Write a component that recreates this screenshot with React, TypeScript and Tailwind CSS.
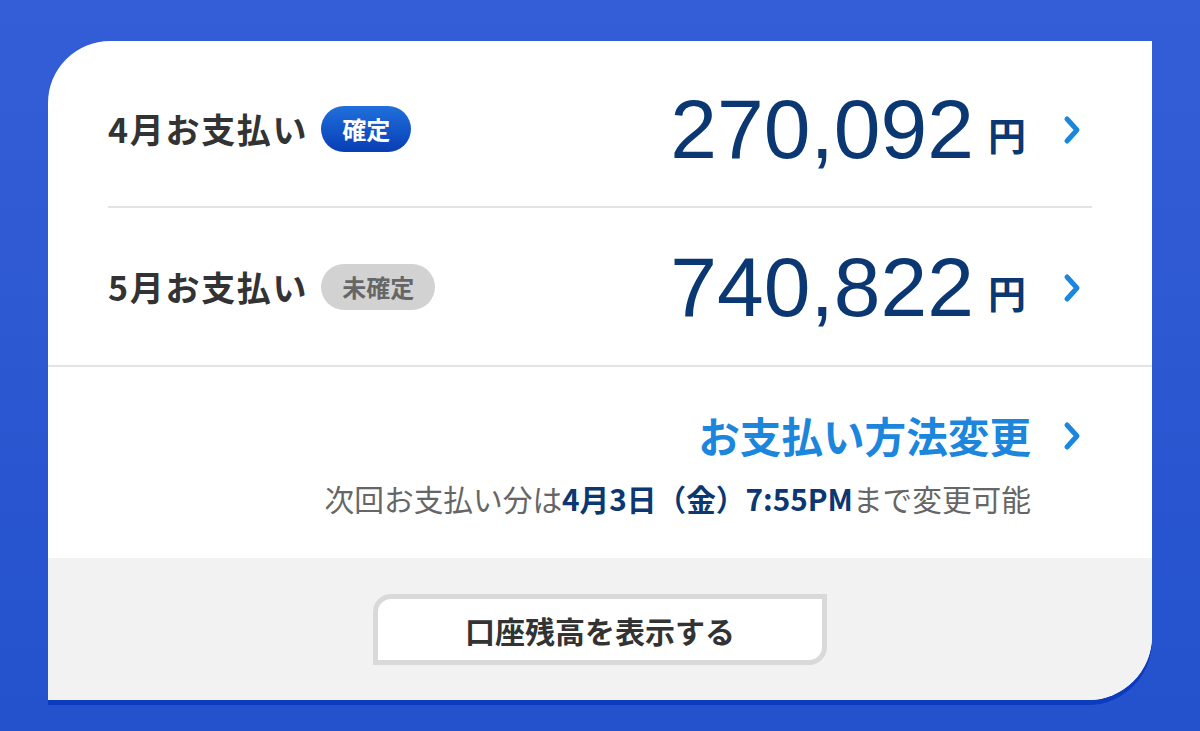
const jp = { fontFamily: '"Noto Sans CJK JP", "Noto Sans", sans-serif' };

function Chevron({ className = "" }: { className?: string }) {
  return (
    <svg width="18" height="30" viewBox="0 0 18 30" className={className}>
      <path
        d="M4 4 L14 15 L4 26"
        fill="none"
        stroke="#1a86de"
        strokeWidth="5"
        strokeLinecap="round"
        strokeLinejoin="round"
      />
    </svg>
  );
}

function PaymentRow({
  month,
  badge,
  fixed,
  amount,
  divider,
}: {
  month: string;
  badge: string;
  fixed: boolean;
  amount: string;
  divider?: boolean;
}) {
  return (
    <div
      className={`h-[157px] flex items-center ${divider ? "border-b-2 border-[#e3e3e3]" : ""}`}
    >
      <span className="text-[34px] font-bold text-[#333] tracking-[0.05em] leading-none" style={jp}>
        {month}お支払い
      </span>
      <span
        className={`ml-[13px] h-[46px] px-[21px] rounded-full flex items-center text-[24px] font-bold leading-none ${
          fixed
            ? "bg-gradient-to-b from-[#2170dc] to-[#0a3db4] text-white"
            : "bg-[#d2d2d2] text-[#666]"
        }`}
        style={jp}
      >
        {badge}
      </span>
      <div className="flex-1 flex items-center justify-end">
        <div className="flex items-center text-[#0b3772]">
          <span
            className="text-[84px] leading-none"
            style={{ fontFamily: '"Liberation Sans", Arial, sans-serif' }}
          >
            {amount}
          </span>
          <span className="ml-[14px] mt-[10px] text-[38px] font-bold leading-none" style={jp}>
            円
          </span>
        </div>
        <Chevron className="ml-[37px] mr-[11px] mt-[2px]" />
      </div>
    </div>
  );
}

export default function App() {
  return (
    <div className="w-full h-[731px] bg-gradient-to-b from-[#345ed8] to-[#2352cc] pt-[41px] px-[48px]">
      <div className="h-[659px] bg-white rounded-tl-[62px] rounded-br-[64px] overflow-hidden flex flex-col shadow-[0_5px_0_#0d3bbd]">
        <section className="border-b-2 border-[#e3e3e3]">
          <div className="px-[60px] pt-[10px]">
            <PaymentRow month="4月" badge="確定" fixed amount="270,092" divider />
            <PaymentRow month="5月" badge="未確定" fixed={false} amount="740,822" />
          </div>
        </section>

        <section className="h-[191px] px-[60px] pt-[48px] flex flex-col items-end">
          <a className="flex items-center cursor-pointer">
            <span className="text-[41.6px] font-bold text-[#1b86dc] leading-none" style={jp}>
              お支払い方法変更
            </span>
            <Chevron className="ml-[32px] mr-[11px]" />
          </a>
          <p className="mt-[27px] mr-[61px] text-[29.7px] text-[#666] leading-none" style={jp}>
            次回お支払い分は
            <span className="font-bold text-[#0b3772]">4月3日（金）7:55PM</span>
            まで変更可能
          </p>
        </section>

        <section className="flex-1 bg-[#f2f2f2] flex justify-center pt-[36px]">
          <button
            className="w-[454px] h-[71px] bg-white border-[5px] border-[#d9d9d9] rounded-tl-[18px] rounded-br-[18px] flex items-center justify-center text-[30px] font-bold text-[#333] leading-none"
            style={jp}
          >
            口座残高を表示する
          </button>
        </section>
      </div>
    </div>
  );
}
